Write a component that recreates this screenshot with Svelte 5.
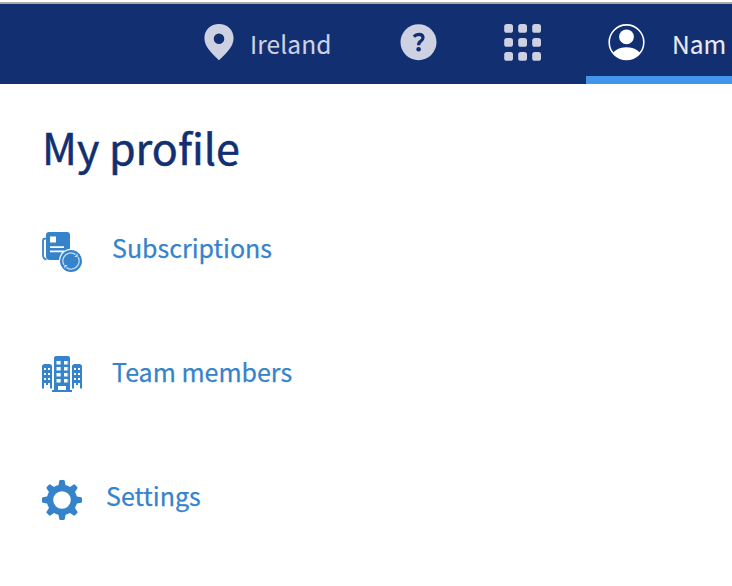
<script>
  const dots = [0, 14, 28].flatMap((y) => [0, 14, 28].map((x) => ({ x, y })));
  const toothAngles = [0, 45, 90, 135, 180, 225, 270, 315];
  const floors = [5, 11, 17, 23];
  const sideFloors = [12, 17, 22, 27];
</script>

<div class="page">
  <header>
    <div class="place">
      <svg width="30" height="38" viewBox="0 0 30 38">
        <path fill-rule="evenodd" d="M15 0C6.7 0 .4 6 .4 14.2C.4 23.5 10 31 15 36.3C20 31 29.6 23.5 29.6 14.2C29.6 6 23.3 0 15 0ZM15 9.4A5.3 5.3 0 1 1 15 20A5.3 5.3 0 1 1 15 9.4Z" />
      </svg>
      <span class="ireland">Ireland</span>
    </div>
    <svg class="help" width="37" height="37" viewBox="0 0 37 37">
      <circle cx="18.5" cy="18.2" r="18" />
      <path d="M13.8 12.6Q16 10.3 18.9 10.3Q23 10.3 23 13.8Q23 15.8 20.8 17.2Q18.5 18.7 18.6 21.3" fill="none" stroke="#122f72" stroke-width="3.2" />
      <circle cx="18.6" cy="25.3" r="2.3" class="dot" />
    </svg>
    <svg class="apps" width="38" height="38" viewBox="0 0 38 38">
      {#each dots as d}
        <rect x={d.x + 0.2} y={d.y} width="8.8" height="8.8" rx="2.6" />
      {/each}
    </svg>
    <div class="account">
      <svg width="37" height="37" viewBox="0 0 37 37">
        <clipPath id="face"><circle cx="18.5" cy="18.2" r="17.5" /></clipPath>
        <g class="white">
          <circle cx="18.5" cy="12.8" r="7.4" />
          <ellipse cx="18.5" cy="34.5" rx="15.5" ry="11.3" clip-path="url(#face)" />
        </g>
        <circle cx="18.5" cy="18.2" r="17.3" fill="none" stroke="#fff" stroke-width="1.6" />
      </svg>
      <span class="name">Nam</span>
    </div>
  </header>

  <main>
    <h1>My profile</h1>
    <nav>
      <a href="#subscriptions">
        <svg width="42" height="42" viewBox="0 0 42 42">
          <path d="M5 6.6H3Q1 6.6 1 9V23Q1 27 4.5 27.5" fill="none" stroke="#3583cb" stroke-width="1.8" />
          <path d="M7 0H25Q28 0 28 3V28H8Q4 28 4 24V3Q4 0 7 0Z" />
          <path class="cut" d="M8 4.5H14V10.5H8ZM8 14.2H22V16H8ZM8 18.5H22V20.3H8Z" />
          <circle cx="29" cy="29" r="12.2" class="cut" />
          <circle cx="29" cy="29" r="11" />
          <path d="M21.9 32.8A8 8 0 0 1 33.5 22.4M36.1 25.2A8 8 0 0 1 24.5 35.6" fill="none" stroke="#c6dcf1" stroke-width="1.4" />
          <path d="M35.7 21.5V25H32.2ZM22.3 36.5V33H25.8Z" fill="#c6dcf1" />
        </svg>
        <span class="subs">Subscriptions</span>
      </a>
      <a href="#team">
        <svg width="42" height="42" viewBox="0 0 42 42">
          <path d="M0 32.5V9.5L2 8H8L10 9.5V32.5H8V29H2V32.5ZM30 32.5V9.5L32 8H38L40 9.5V32.5H38V29H32V32.5Z" />
          <path d="M12 34V2Q12 0 14 0H26Q28 0 28 2V34H30V36H10V34Z" />
          {#each floors as y}
            <path class="cut" d="M14.5 {y}H18V{y + 3.5}H14.5ZM22 {y}H25.5V{y + 3.5}H22Z" />
            <path class="pale" d="M18 {y}H19V{y + 3.5}H18ZM25.5 {y}H26.2V{y + 3.5}H25.5Z" />
          {/each}
          {#each sideFloors as y}
            <path class="cut" d="M2 {y}H4V{y + 2}H2ZM6 {y}H8V{y + 2}H6ZM32 {y}H34V{y + 2}H32ZM36 {y}H38V{y + 2}H36Z" />
          {/each}
          <rect class="cut" x="16" y="30" width="8" height="4" />
        </svg>
        <span class="team">Team members</span>
      </a>
      <a href="#settings">
        <svg width="42" height="42" viewBox="0 0 42 42">
          <circle cx="20" cy="20" r="12" fill="none" stroke="#3583cb" stroke-width="6.4" />
          {#each toothAngles as a}
            <path transform="rotate({a} 20 20)" d="M16.2 6.5L17.3 .8Q17.5 0 18.5 0H21.5Q22.5 0 22.7 .8L23.8 6.5Z" />
          {/each}
        </svg>
        <span class="settings">Settings</span>
      </a>
    </nav>
  </main>
</div>

<style>
  :global(body) { background: #fff; }
  .page {
    width: 732px;
    height: 586px;
    overflow: hidden;
    box-sizing: border-box;
    background: #fff;
    font-family: "Noto Sans CJK JP", "Noto Sans CJK SC", sans-serif;
    padding-top: 2px;
  }
  svg { display: block; flex: none; fill: #3583cb; overflow: visible; }
  span { white-space: nowrap; -webkit-text-stroke: 0.25px currentColor; }
  .cut { fill: #fff; }
  .pale { fill: #b9d5ee; }
  header {
    display: flex;
    height: 80px;
    border-top: 2px solid #aaa9ab;
    background: #122f72;
    color: #cdd1e2;
    font-size: 24.5px;
    line-height: 36px;
  }
  header svg { fill: #cdd1e2; margin-top: 20px; }
  .place { display: flex; margin-left: 204px; width: 196px; }
  .place span { margin: 22px 0 0 16px; letter-spacing: 0.1px; }
  header span { -webkit-text-stroke-width: 0.1px; }
  .dot { fill: #122f72; }
  .apps { margin-left: 67px; }
  .account {
    display: flex;
    flex: none;
    box-sizing: border-box;
    width: 146px;
    margin-left: 44px;
    padding-left: 22px;
    border-bottom: 8px solid #4195eb;
    color: #e8eaf2;
  }
  .account span { margin: 22px 0 0 27px; }
  .white { fill: #fff; }
  main { padding: 29px 42px 0; }
  h1 {
    margin: 0;
    color: #122f72;
    font-size: 43px;
    font-weight: 400;
    line-height: 67px;
    -webkit-text-stroke: 0.5px currentColor;
  }
  nav { display: flex; flex-direction: column; gap: 82px; margin-top: 52px; }
  a { display: flex; height: 42px; color: #3583cb; text-decoration: none; font-size: 25px; line-height: 30px; }
  a span { margin-left: 28px; }
  a .settings { margin-left: 22px; }
</style>
